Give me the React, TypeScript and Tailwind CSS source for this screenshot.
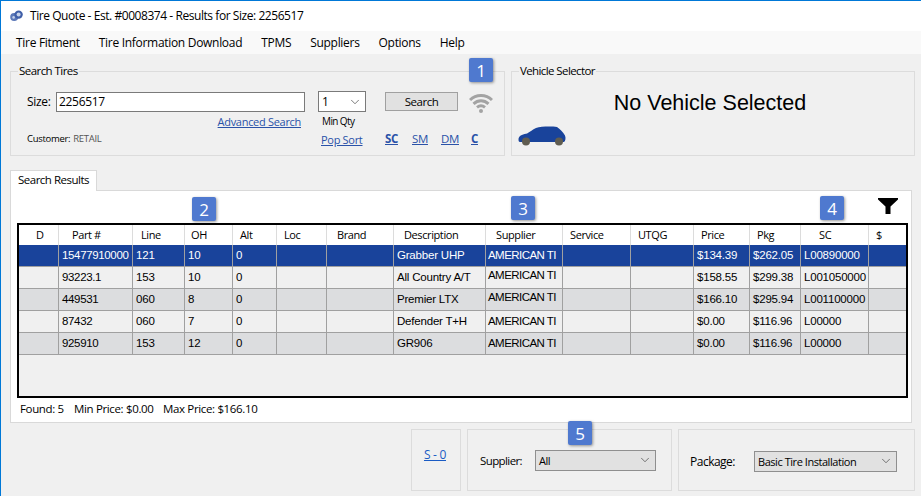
import React from "react";
import { ChevronDown } from "lucide-react";

const gridCols = "grid grid-cols-[40px_74px_52px_48px_44px_50px_67px_92px_77px_68px_63px_56px_51px_68px_39px]";

const headers: [string, string][] = [
  ["D", "pl-[17px]"],
  ["Part #", "pl-[13px]"],
  ["Line", "pl-[8px]"],
  ["OH", "pl-[6px]"],
  ["Alt", "pl-[7px]"],
  ["Loc", "pl-[7px]"],
  ["Brand", "pl-[10px]"],
  ["Description", "pl-[10px]"],
  ["Supplier", "pl-[10px]"],
  ["Service", "pl-[7px]"],
  ["UTQG", "pl-[7px]"],
  ["Price", "pl-[7px]"],
  ["Pkg", "pl-[7px]"],
  ["SC", "pl-[18px]"],
  ["$", "pl-[7px]"],
];

const rows: string[][] = [
  ["", "15477910000", "121", "10", "0", "", "", "Grabber UHP", "AMERICAN TI", "", "", "$134.39", "$262.05", "L00890000", ""],
  ["", "93223.1", "153", "10", "0", "", "", "All Country A/T", "AMERICAN TI", "", "", "$158.55", "$299.38", "L001050000", ""],
  ["", "449531", "060", "8", "0", "", "", "Premier LTX", "AMERICAN TI", "", "", "$166.10", "$295.94", "L001100000", ""],
  ["", "87432", "060", "7", "0", "", "", "Defender T+H", "AMERICAN TI", "", "", "$0.00", "$116.96", "L00000", ""],
  ["", "925910", "153", "12", "0", "", "", "GR906", "AMERICAN TI", "", "", "$0.00", "$116.96", "L00000", ""],
];

const rowBg = [
  "bg-[#19439b] text-white",
  "bg-[#f0f0f0] text-black",
  "bg-[#dcdddf] text-black",
  "bg-[#f0f0f0] text-black",
  "bg-[#dcdddf] text-black",
];

function Badge({ n, className }: { n: number; className: string }) {
  return (
    <div
      className={
        "absolute z-10 flex h-6 w-6 items-center justify-center rounded-[2px] bg-[#4f79cf] text-[17px] leading-none text-white shadow-[1px_1px_3px_rgba(0,0,0,0.4)] font-['Open_Sans',sans-serif] " +
        className
      }
    >
      {n}
    </div>
  );
}

function Car() {
  return (
    <svg width="48" height="20" viewBox="0 0 48 20" className="block">
      <path
        d="M0.5 13.5C0.5 10 4 8.5 8 7.8C11 7.2 14 3.6 18 2C23 0.4 33 0.2 39 1C42 3 45 6 47 9.5C48 12 47.5 15 46 16H2C0.8 15.6 0.5 15 0.5 13.5Z"
        fill="#19439b"
      />
      <circle cx="8" cy="15.5" r="4" fill="#5f5c50" />
      <circle cx="41" cy="15.5" r="4" fill="#5f5c50" />
    </svg>
  );
}

function Wifi() {
  return (
    <svg width="24" height="20" viewBox="0 0 24 20" fill="none" stroke="#a3a3a3" strokeWidth="3" className="block">
      <path d="M1 7C7 1 17 1 23 7" />
      <path d="M4.5 10.8C9 6.8 15 6.8 19.5 10.8" />
      <path d="M8 14.4C10.5 12.4 13.5 12.4 16 14.4" />
      <circle cx="12" cy="18" r="2" fill="#a3a3a3" stroke="none" />
    </svg>
  );
}

function TireIcon() {
  return (
    <svg width="13" height="12" viewBox="0 0 13 12" className="block">
      <circle cx="4.2" cy="7" r="4" fill="#5b78b8" />
      <circle cx="8.6" cy="4.6" r="4.2" fill="#3f5fa8" />
      <circle cx="8.6" cy="4.6" r="2" fill="#c5d2ea" />
      <circle cx="3.6" cy="7.4" r="1.3" fill="#c5d2ea" />
    </svg>
  );
}

function Select({ value, className }: { value: string; className: string }) {
  return (
    <div className={"flex items-center justify-between border pl-[3px] pr-[3px] " + className}>
      <span>{value}</span>
      <ChevronDown size={14} strokeWidth={1.2} className="text-[#444]" />
    </div>
  );
}

export default function App() {
  return (
    <div className="relative flex h-[496px] w-[921px] flex-col overflow-hidden border-l border-t border-[#0078d7] bg-[#f0f0f0] text-[12px] leading-none text-black font-['Open_Sans',sans-serif] tracking-[-0.3px]">
      {/* Title bar */}
      <div className="flex h-[30px] shrink-0 items-center bg-white pl-[9px]">
        <TireIcon />
        <span className="ml-[7px] tracking-[-0.44px]">Tire Quote - Est. #0008374 - Results for Size: 2256517</span>
      </div>
      {/* Menu */}
      <div className="flex h-[23px] shrink-0 items-center gap-[19px] bg-[#f9f9f9] pl-[15px]">
        {["Tire Fitment", "Tire Information Download", "TPMS", "Suppliers", "Options", "Help"].map((m) => (
          <span key={m}>{m}</span>
        ))}
      </div>

      {/* Top groups */}
      <div className="mt-[10px] flex h-[92px] shrink-0 gap-[6px] pl-[9px]">
        <fieldset className="relative h-[92px] w-[495px] border border-[#dcdcdc]">
          <legend className="ml-[7px] px-[1px] text-[11.5px] leading-[14px] tracking-[-0.55px]">Search Tires</legend>
          <div className="mt-[13px] grid grid-cols-[291px_67px_1fr] grid-rows-[21px_18px_18px] pl-[16px]">
            <div className="flex items-center">
              <span className="w-[29px]">Size:</span>
              <div className="flex h-[20px] w-[249px] items-center border border-[#7a7a7a] bg-white pl-[2px]">2256517</div>
            </div>
            <Select value="1" className="h-[21px] w-[48px] border-[#7a7a7a] bg-white" />
            <div className="flex items-center">
              <div className="flex h-[19px] w-[73px] items-center justify-center border border-[#a0a0a0] bg-[#e1e1e1] text-[11.5px] tracking-[-0.45px]">Search</div>
            </div>

            <div className="flex w-[274px] items-center justify-end">
              <a className="text-[11px] text-[#2a52a8] underline">Advanced Search</a>
            </div>
            <div className="flex items-center pl-[4px] text-[10px] tracking-[-0.6px]">Min Qty</div>
            <div />

            <div className="flex items-center text-[9.5px]">
              <span>Customer:</span>
              <span className="ml-[3px] text-[#555]">RETAIL</span>
            </div>
            <div className="flex items-center pl-[3px]">
              <a className="text-[11px] text-[#2a52a8] underline">Pop Sort</a>
            </div>
            <div className="flex items-center text-[11.5px] tracking-[-0.4px] text-[#2a52a8] underline">
              <a className="w-[27px] font-bold">SC</a>
              <a className="w-[29px]">SM</a>
              <a className="w-[30px]">DM</a>
              <a className="font-bold">C</a>
            </div>
          </div>
          <div className="absolute left-[458px] top-[15px]">
            <Wifi />
          </div>
        </fieldset>

        <fieldset className="relative flex h-[92px] w-[404px] flex-col border border-[#dcdcdc]">
          <legend className="ml-[7px] px-[1px] text-[11.5px] leading-[14px] tracking-[-0.6px]">Vehicle Selector</legend>
          <div className="mt-[13px] pr-[6px] text-center text-[21.5px] leading-[24px] tracking-normal font-['Liberation_Sans',sans-serif]">
            No Vehicle Selected
          </div>
          <div className="ml-[6px] mt-[11px]">
            <Car />
          </div>
        </fieldset>
      </div>

      {/* Tab */}
      <div className="mt-[14px] flex h-[20px] shrink-0 pl-[9px]">
        <div className="z-[1] flex h-[21px] w-[87px] items-center justify-center border-x border-t border-[#d9d9d9] bg-white pb-[2px] text-[11.5px] tracking-[-0.5px]">
          Search Results
        </div>
      </div>

      {/* Results panel */}
      <div className="ml-[9px] flex h-[233px] w-[902px] shrink-0 flex-col border border-[#d9d9d9] bg-white px-[6px] pt-[32px]">
        <div className="h-[175px] w-[891px] shrink-0 overflow-hidden border-2 border-black bg-[#f0f0f0] font-['Liberation_Sans',sans-serif] text-[11.5px] tracking-[-0.2px]">
          <div className={gridCols + " h-[20px] bg-white font-['Open_Sans',sans-serif] text-[11px] tracking-[-0.4px]"}>
            {headers.map(([h, pl]) => (
              <div key={h} className={"flex items-center border-r border-[#dcdcdc] pb-[1px] " + pl}>
                {h}
              </div>
            ))}
          </div>
          {rows.map((r, i) => (
            <div key={i} className={gridCols + " h-[22px] border-b border-[#a0a0a0] " + rowBg[i]}>
              {r.map((c, j) => (
                <div
                  key={j}
                  className={
                    "flex items-center overflow-hidden whitespace-nowrap border-r border-[#a0a0a0] " +
                    (j === 8 ? "pl-[2px] tracking-[-0.55px] " : j === 1 ? "pl-[3px] tracking-[-0.35px] " : "pl-[3px] ") +
                    (j === 8 && (i === 1 || i === 2) ? "pb-[3px]" : "")
                  }
                >
                  {c}
                </div>
              ))}
            </div>
          ))}
        </div>
        <div className="mt-[5px] flex h-[12px] items-center text-[11.5px] pl-[3px] tracking-[-0.35px]">
          <span className="w-[54px]">Found: 5</span>
          <span className="w-[89px]">Min Price: $0.00</span>
          <span>Max Price: $166.10</span>
        </div>
      </div>

      {/* Bottom groups */}
      <div className="mt-[6px] flex h-[62px] shrink-0 justify-end gap-[6px] pr-[6px]">
        <div className="flex w-[50px] items-center justify-center border border-[#dcdcdc] pb-[10px] pr-[2px]">
          <a className="text-[12px] text-[#1a5bc4] underline">S - 0</a>
        </div>
        <div className="flex w-[205px] items-center border border-[#dcdcdc] pl-[12px]">
          <span className="w-[55px] pt-[2px] text-[11.5px] tracking-[-0.6px]">Supplier:</span>
          <Select value="All" className="h-[21px] w-[121px] border-[#8f8f8f] bg-[#e1e1e1] text-[11px] tracking-[-0.45px]" />
        </div>
        <div className="flex w-[237px] items-center border border-[#dcdcdc] pl-[11px]">
          <span className="w-[64px] pt-[3px] tracking-[-0.5px]">Package:</span>
          <Select value="Basic Tire Installation" className="mt-[2px] h-[21px] w-[143px] border-[#8f8f8f] bg-[#e1e1e1] text-[11px] tracking-[-0.45px]" />
        </div>
      </div>

      {/* Annotation badges and filter icon lie over the content */}
      <Badge n={1} className="left-[468px] top-[57px]" />
      <Badge n={2} className="left-[191px] top-[196px]" />
      <Badge n={3} className="left-[510px] top-[195px]" />
      <Badge n={4} className="left-[819px] top-[195px]" />
      <Badge n={5} className="left-[567px] top-[420px]" />
      <svg width="20" height="16" viewBox="0 0 20 16" className="absolute left-[877px] top-[197px]">
        <path d="M0 0H20V1.5L12.5 8.5V16H7.5V8.5L0 1.5Z" fill="#000" />
      </svg>
    </div>
  );
}
